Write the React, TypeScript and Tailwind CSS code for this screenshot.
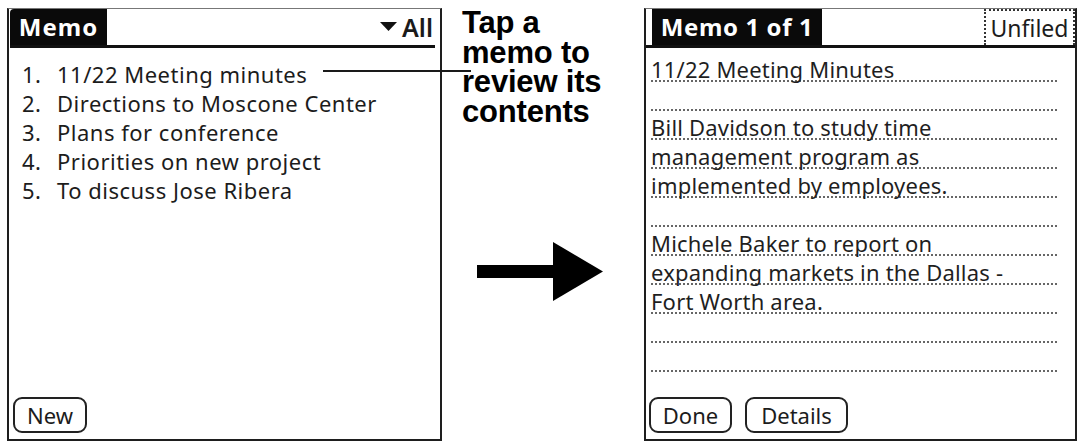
import React from "react";

const palm = "font-['Noto_Sans',_'DejaVu_Sans',_sans-serif]";

function LeftPanel() {
  const items = [
    "11/22 Meeting minutes",
    "Directions to Moscone Center",
    "Plans for conference",
    "Priorities on new project",
    "To discuss Jose Ribera",
  ];
  return (
    <div className={`mt-[8px] ml-[7px] w-[435px] h-[433px] border-2 border-t border-[#1e1e1e] border-t-[#777] flex flex-col pl-[1px] pr-[5px] pb-[6px] ${palm}`}>
      <div className="flex items-stretch h-[39px] border-b-[3px] border-[#111]">
        <div className="w-[97px] bg-[#0a0a0a] text-white font-bold text-[24px] leading-none flex items-center justify-center rounded-tl-[4px] tracking-[1px]">
          Memo
        </div>
        <div className="ml-auto flex items-center gap-[5px] pr-[2px] text-[#1a1a1a]">
          <svg width="17" height="10" viewBox="0 0 17 10">
            <polygon points="0,0 17,0 8.5,9" fill="#111" />
          </svg>
          <span className="text-[25px] font-semibold leading-none">All</span>
        </div>
      </div>
      <ul className="mt-[11px] pl-[12px] text-[#1c1c1c] text-[22px] tracking-[0.5px]">
        {items.map((t, i) => (
          <li key={i} className="flex h-[29px] items-center leading-none whitespace-nowrap">
            <span className="w-[35px]">{i + 1}.</span>
            <span>{t}</span>
          </li>
        ))}
      </ul>
      <div className="mt-auto pl-[3px]">
        <PalmButton label="New" w="w-[74px]" />
      </div>
    </div>
  );
}

function PalmButton({ label, w }: { label: string; w: string }) {
  return (
    <div className={`${w} h-[36px] border-2 border-[#222] rounded-[9px] flex items-center justify-center text-[22px] text-[#1c1c1c] leading-none`}>
      {label}
    </div>
  );
}

function RightPanel() {
  const lines = [
    "11/22 Meeting Minutes",
    "",
    "Bill Davidson to study time",
    "management program as",
    "implemented by employees.",
    "",
    "Michele Baker to report on",
    "expanding markets in the Dallas -",
    "Fort Worth area.",
    "",
    "",
  ];
  return (
    <div className={`mt-[8px] ml-auto mr-[5px] w-[433px] h-[433px] border-2 border-t border-[#1e1e1e] border-t-[#777] flex flex-col pb-[6px] ${palm}`}>
      <div className="flex items-stretch h-[39px] border-b-[3px] border-[#111] pl-[6px]">
        <div className="w-[170px] bg-[#0a0a0a] text-white font-bold text-[24px] leading-none flex items-center justify-center tracking-[0.6px]">
          Memo 1 of 1
        </div>
        <div className="ml-auto w-[91px] border-2 border-dotted border-[#333] border-b-0 flex items-center justify-center text-[23px] text-[#1c1c1c] leading-none">
          Unfiled
        </div>
      </div>
      <div className="mt-[5px] pl-[5px] pr-[18px] text-[#1f1f1f] text-[22px] tracking-[0.2px]">
        {lines.map((t, i) => (
          <div key={i} className="h-[29px] border-b-2 border-dotted border-[#666] flex items-end whitespace-nowrap">
            <span className="leading-[22px] block">{t}</span>
          </div>
        ))}
      </div>
      <div className="mt-auto pl-[3px] flex gap-[13px]">
        <PalmButton label="Done" w="w-[83px]" />
        <PalmButton label="Details" w="w-[103px]" />
      </div>
    </div>
  );
}

function Middle() {
  return (
    <div className="w-[200px] flex flex-col pl-[20px]">
      <div className="mt-[8px] font-['Liberation_Sans',_Arial,_sans-serif] font-bold text-[31px] leading-[29.5px] text-black tracking-[-0.2px]">
        <div>Tap a</div>
        <div>memo to</div>
        <div>review its</div>
        <div>contents</div>
      </div>
      <div className="mt-[116px] pl-[15px]">
        <svg width="127" height="60" viewBox="0 0 127 60">
          <rect x="0" y="23" width="78" height="13" fill="#000" />
          <polygon points="76,0 126,29.5 76,59" fill="#000" />
        </svg>
      </div>
    </div>
  );
}

export default function App() {
  return (
    <div className="relative w-[1082px] h-[443px] bg-white flex overflow-hidden">
      <LeftPanel />
      <Middle />
      <RightPanel />
      <div className="absolute left-[323px] top-[70px] w-[148px] h-[2px] bg-[#1a1a1a]" />
    </div>
  );
}
